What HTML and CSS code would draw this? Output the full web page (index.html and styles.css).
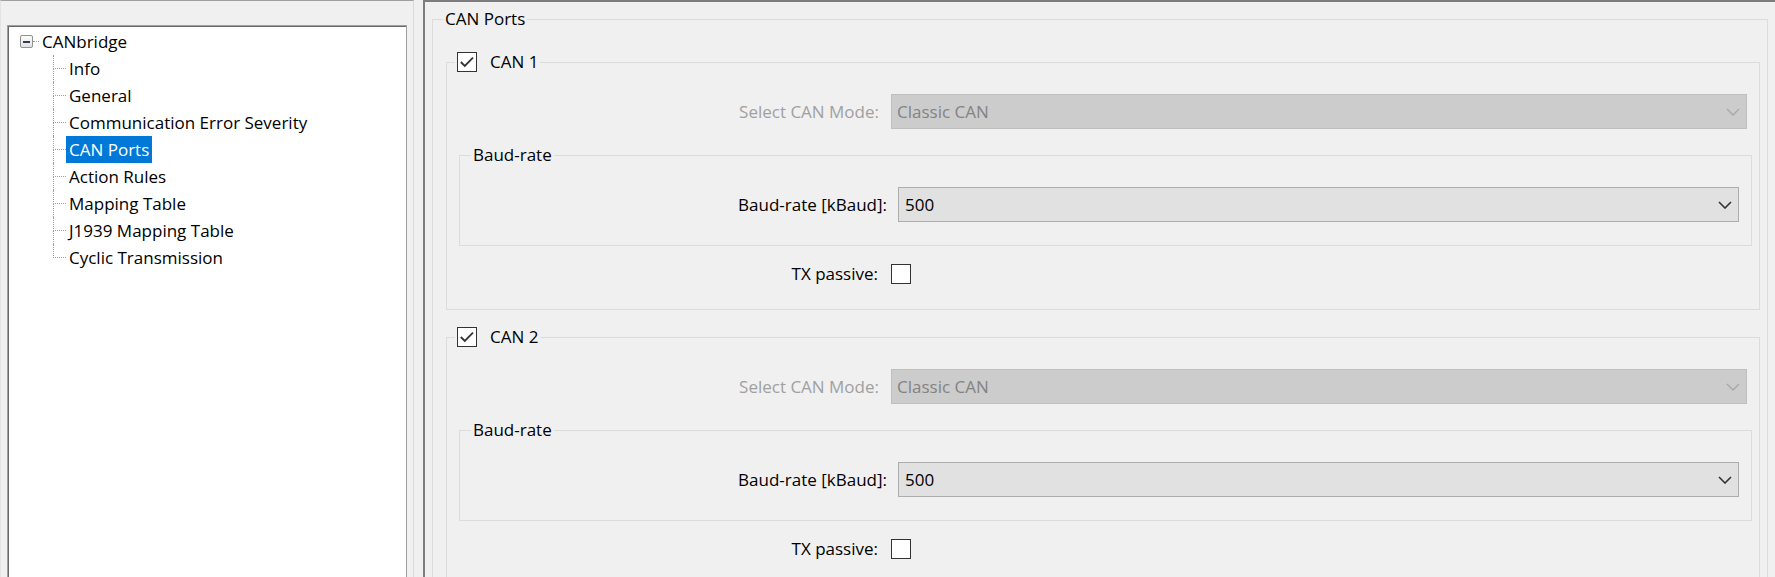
FILE: index.html
```html
<!DOCTYPE html>
<html lang="en">
<head>
  <meta charset="UTF-8">
  <title>CANbridge - CAN Ports</title>
  <link rel="stylesheet" href="styles.css">
</head>
<body>
  <div class="window">
    <aside class="nav-pane">
      <div class="tree">
        <div class="tree-root">
          <span class="expander"><span class="minus"></span></span>
          <span class="root-link"></span>
          <span class="tree-label">CANbridge</span>
        </div>
        <ul class="tree-children">
          <li><span class="branch"><span class="branch-top"></span><span class="branch-bottom"></span></span><span class="tree-label">Info</span></li>
          <li><span class="branch"><span class="branch-top"></span><span class="branch-bottom"></span></span><span class="tree-label">General</span></li>
          <li><span class="branch"><span class="branch-top"></span><span class="branch-bottom"></span></span><span class="tree-label">Communication Error Severity</span></li>
          <li><span class="branch"><span class="branch-top"></span><span class="branch-bottom"></span></span><span class="tree-label selected">CAN Ports</span></li>
          <li><span class="branch"><span class="branch-top"></span><span class="branch-bottom"></span></span><span class="tree-label">Action Rules</span></li>
          <li><span class="branch"><span class="branch-top"></span><span class="branch-bottom"></span></span><span class="tree-label">Mapping Table</span></li>
          <li><span class="branch"><span class="branch-top"></span><span class="branch-bottom"></span></span><span class="tree-label">J1939 Mapping Table</span></li>
          <li class="last"><span class="branch"><span class="branch-top"></span><span class="branch-bottom"></span></span><span class="tree-label">Cyclic Transmission</span></li>
        </ul>
      </div>
    </aside>

    <div class="splitter"></div>

    <main class="content-pane">
      <fieldset class="group ports">
        <legend>CAN Ports</legend>

        <!-- CAN 1 -->
        <fieldset class="group port">
          <legend class="check-legend"><span class="check checked"></span>CAN 1</legend>
          <div class="form-row mode-row">
            <span class="field-label disabled">Select CAN Mode:</span>
            <div class="combo disabled">
              <span>Classic CAN</span>
              <svg class="chevron" width="14" height="8" viewBox="0 0 14 8"><path d="M1 1 L7 7 L13 1" fill="none" stroke="currentColor" stroke-width="1.4"/></svg>
            </div>
          </div>
          <fieldset class="group baud">
            <legend>Baud-rate</legend>
            <div class="form-row baud-row">
              <span class="field-label">Baud-rate [kBaud]:</span>
              <div class="combo">
                <span>500</span>
                <svg class="chevron" width="14" height="8" viewBox="0 0 14 8"><path d="M1 1 L7 7 L13 1" fill="none" stroke="currentColor" stroke-width="1.6"/></svg>
              </div>
            </div>
          </fieldset>
          <div class="form-row tx-row">
            <span class="field-label">TX passive:</span>
            <span class="check"></span>
          </div>
        </fieldset>

        <!-- CAN 2 -->
        <fieldset class="group port">
          <legend class="check-legend"><span class="check checked"></span>CAN 2</legend>
          <div class="form-row mode-row">
            <span class="field-label disabled">Select CAN Mode:</span>
            <div class="combo disabled">
              <span>Classic CAN</span>
              <svg class="chevron" width="14" height="8" viewBox="0 0 14 8"><path d="M1 1 L7 7 L13 1" fill="none" stroke="currentColor" stroke-width="1.4"/></svg>
            </div>
          </div>
          <fieldset class="group baud">
            <legend>Baud-rate</legend>
            <div class="form-row baud-row">
              <span class="field-label">Baud-rate [kBaud]:</span>
              <div class="combo">
                <span>500</span>
                <svg class="chevron" width="14" height="8" viewBox="0 0 14 8"><path d="M1 1 L7 7 L13 1" fill="none" stroke="currentColor" stroke-width="1.6"/></svg>
              </div>
            </div>
          </fieldset>
          <div class="form-row tx-row">
            <span class="field-label">TX passive:</span>
            <span class="check"></span>
          </div>
        </fieldset>
      </fieldset>
    </main>
  </div>
</body>
</html>
```

FILE: styles.css
```css
* {
  box-sizing: border-box;
}
body {
  margin: 0;
  background: #f0f0f0;
  font-family: "Open Sans", "Noto Sans", sans-serif;
  font-size: 17px;
  color: #000;
  overflow: hidden;
}
.window {
  display: flex;
  height: 577px;
  overflow: hidden;
}

/* left tree pane */
.nav-pane {
  width: 414px;
  flex: none;
  border-top: 1px solid #a0a0a0;
  border-left: 1px solid #e3e3e3;
  border-right: 1px solid #d9d9d9;
  padding: 24px 6px 0 6px;
}
.tree {
  height: 600px;
  background: #fff;
  border: 1px solid #a0a0a0;
  box-shadow: inset 1px 1px 0 #696969;
  padding-top: 2px;
}
.tree-root {
  display: flex;
  align-items: center;
  height: 27px;
  padding-left: 12px;
}
.expander {
  width: 13px;
  height: 13px;
  border: 1px solid #919191;
  border-radius: 2px;
  background: linear-gradient(#fdfdfd, #e1e1e1);
  display: flex;
  align-items: center;
  justify-content: center;
}
.minus {
  width: 7px;
  height: 2px;
  background: #2a3b5c;
}
.root-link {
  width: 6px;
  border-top: 1px dotted #a0a0a0;
}
.tree-label {
  line-height: 27px;
  padding: 0 3px;
  white-space: nowrap;
}
.tree-label.selected {
  background: #0078d7;
  color: #fff;
}
.tree-children {
  list-style: none;
  margin: 0;
  padding: 0 0 0 45px;
}
.tree-children li {
  display: flex;
  height: 27px;
}
.branch {
  display: flex;
  flex-direction: column;
  width: 13px;
}
.branch-top {
  height: 14px;
  border-left: 1px dotted #a0a0a0;
  border-bottom: 1px dotted #a0a0a0;
}
.branch-bottom {
  height: 13px;
  border-left: 1px dotted #a0a0a0;
}
.tree-children li.last .branch-bottom {
  border-left: none;
}

.splitter {
  width: 9px;
  flex: none;
}

/* right content pane */
.content-pane {
  flex: 1;
  border-top: 2px solid #7d7d7d;
  border-left: 2px solid #7d7d7d;
  padding: 5px 7px 0 7px;
  overflow: hidden;
}
.group {
  margin: 0;
  border: 1px solid #dcdcdc;
  min-width: 0;
}
.group > legend {
  line-height: 24px;
  padding: 0 2px;
}
.ports {
  padding: 0 7px 0 13px;
}
.ports > legend {
  margin-left: -3px;
}
.port {
  margin-top: 19px;
  padding: 0 7px 24px 12px;
}
.port + .port {
  margin-top: 15px;
}
.check-legend {
  display: flex;
  align-items: center;
  gap: 13px;
  margin-left: -4px;
}
.check {
  width: 20px;
  height: 20px;
  flex: none;
  border: 1px solid #333;
  background: #fff;
  display: inline-block;
}
.check.checked {
  background-color: #fff;
  background-image: url("data:image/svg+xml,%3Csvg xmlns='http://www.w3.org/2000/svg' width='18' height='18' viewBox='0 0 18 18'%3E%3Cpath d='M2.8 9 L6.8 13 L15 4.6' fill='none' stroke='%23333' stroke-width='1.8'/%3E%3C/svg%3E");
  background-repeat: no-repeat;
}

.form-row {
  display: grid;
  align-items: center;
}
.field-label {
  text-align: right;
  white-space: nowrap;
}
.field-label.disabled {
  color: #a0a0a0;
}
.mode-row {
  grid-template-columns: 420px 1fr;
  column-gap: 12px;
  margin: 20px 5px 0 0;
}
.baud {
  margin-top: 14px;
  padding: 0 12px 23px 0;
}
.baud > legend {
  margin-left: 11px;
}
.baud-row {
  grid-template-columns: 427px 1fr;
  column-gap: 11px;
  margin-top: 20px;
}
.tx-row {
  grid-template-columns: 419px 20px;
  column-gap: 13px;
  margin-top: 16px;
}

.combo {
  height: 35px;
  display: flex;
  align-items: center;
  justify-content: space-between;
  padding: 0 6px 0 6px;
  background: #e1e1e1;
  border: 1px solid #adadad;
  color: #000;
}
.combo.disabled {
  background: #cccccc;
  border-color: #bfbfbf;
  color: #838383;
  padding-left: 5px;
}
.combo.disabled .chevron {
  color: #a8a8a8;
}
.chevron {
  color: #333;
}
```
